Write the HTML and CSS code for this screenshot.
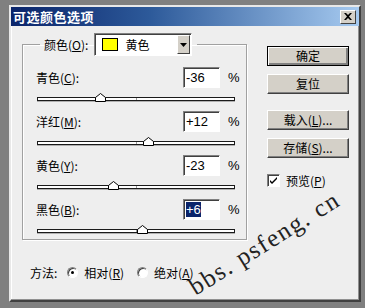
FILE: index.html
```html
<!DOCTYPE html>
<html lang="zh-CN">
<head>
    <meta charset="UTF-8">
    <title>可选颜色选项</title>
    <link rel="stylesheet" href="styles.css">
</head>
<body>
    <div class="window">
        <div class="titlebar">
            <span class="title">可选颜色选项</span>
            <span class="close-btn">
                <svg width="8" height="7" viewBox="0 0 8 7"><path d="M0 0 L2 0 L4 2 L6 0 L8 0 L5 3.5 L8 7 L6 7 L4 5 L2 7 L0 7 L3 3.5 Z" fill="#000"/></svg>
            </span>
        </div>

        <div class="content">
            <div class="left-col">
                <fieldset class="group">
                    <legend>
                        <span class="legend-label">颜色(<u>O</u>):</span>
                        <span class="dropdown">
                            <span class="swatch"></span>
                            <span class="dropdown-text">黄色</span>
                            <span class="dropdown-arrow">
                                <svg width="7" height="4" viewBox="0 0 7 4"><path d="M0 0 L7 0 L3.5 4 Z" fill="#000"/></svg>
                            </span>
                        </span>
                    </legend>

                    <div class="row">
                        <div class="row-head">
                            <span class="row-label">青色(<u>C</u>):</span>
                            <span class="num-box">-36</span>
                            <span class="pct">%</span>
                        </div>
                        <div class="track">
                            <span class="thumb" style="left: 62px;"><svg width="11" height="9" viewBox="0 0 11 9"><path d="M0.5 8.5 L0.5 4.5 L5.5 0.5 L10.5 4.5 L10.5 8.5 Z" fill="#fff" stroke="#000"/></svg></span>
                        </div>
                    </div>

                    <div class="row">
                        <div class="row-head">
                            <span class="row-label">洋红(<u>M</u>):</span>
                            <span class="num-box">+12</span>
                            <span class="pct">%</span>
                        </div>
                        <div class="track">
                            <span class="thumb" style="left: 110px;"><svg width="11" height="9" viewBox="0 0 11 9"><path d="M0.5 8.5 L0.5 4.5 L5.5 0.5 L10.5 4.5 L10.5 8.5 Z" fill="#fff" stroke="#000"/></svg></span>
                        </div>
                    </div>

                    <div class="row">
                        <div class="row-head">
                            <span class="row-label">黄色(<u>Y</u>):</span>
                            <span class="num-box">-23</span>
                            <span class="pct">%</span>
                        </div>
                        <div class="track">
                            <span class="thumb" style="left: 75px;"><svg width="11" height="9" viewBox="0 0 11 9"><path d="M0.5 8.5 L0.5 4.5 L5.5 0.5 L10.5 4.5 L10.5 8.5 Z" fill="#fff" stroke="#000"/></svg></span>
                        </div>
                    </div>

                    <div class="row">
                        <div class="row-head">
                            <span class="row-label">黑色(<u>B</u>):</span>
                            <span class="num-box"><span class="selected">+6</span></span>
                            <span class="pct">%</span>
                        </div>
                        <div class="track">
                            <span class="thumb" style="left: 104px;"><svg width="11" height="9" viewBox="0 0 11 9"><path d="M0.5 8.5 L0.5 4.5 L5.5 0.5 L10.5 4.5 L10.5 8.5 Z" fill="#fff" stroke="#000"/></svg></span>
                        </div>
                    </div>
                </fieldset>

                <div class="method">
                    <span class="method-label">方法:</span>
                    <span class="radio checked"></span>
                    <span class="radio-text">相对(<u>R</u>)</span>
                    <span class="radio"></span>
                    <span class="radio-text">绝对(<u>A</u>)</span>
                </div>
            </div>

            <div class="right-col">
                <button class="btn default">确定</button>
                <button class="btn">复位</button>
                <button class="btn spaced">载入(<u>L</u>)...</button>
                <button class="btn">存储(<u>S</u>)...</button>
                <div class="preview">
                    <span class="checkbox">
                        <svg width="9" height="9" viewBox="0 0 9 9"><path d="M1 4 L3 6 L8 1 L8 3 L3 8 L1 6 Z" fill="#000"/></svg>
                    </span>
                    <span>预览(<u>P</u>)</span>
                </div>
            </div>
        </div>

        <!-- watermark over the dialog -->
        <div class="watermark">bbs. psfeng. cn</div>
    </div>
</body>
</html>
```

FILE: styles.css
```css
body {
    margin: 0;
    padding: 0;
    background-color: #808080;
    font-family: "Noto Sans CJK SC", "Liberation Sans", sans-serif;
    font-size: 12px;
    color: #000;
}
u {
    text-decoration: underline;
    text-underline-offset: 1px;
}
.window {
    position: relative;
    box-sizing: border-box;
    width: 352px;
    height: 297px;
    margin: 5px 0 0 9px;
    background: #eeeeee;
    border: 2px solid;
    border-color: #e8e8e8 #404040 #404040 #e8e8e8;
    box-shadow: inset -1px -1px #909090, inset 1px 1px #ffffff;
    overflow: hidden;
}
.titlebar {
    display: flex;
    align-items: center;
    justify-content: space-between;
    height: 19px;
    padding: 0 3px 0 2px;
    background: linear-gradient(to right, #0a246a, #2d5a9a 40%, #a6caf0);
}
.title {
    color: white;
    font-weight: bold;
    font-size: 13px;
    letter-spacing: 0.5px;
}
.close-btn {
    display: flex;
    align-items: center;
    justify-content: center;
    box-sizing: border-box;
    width: 16px;
    height: 14px;
    background: #d4d0c8;
    border: 1px solid;
    border-color: #fff #404040 #404040 #fff;
}
.content {
    display: flex;
    padding: 7px 9px 0 11px;
}
.left-col {
    width: 225px;
}
.right-col {
    width: 82px;
    margin-left: 20px;
    margin-top: 13px;
    display: flex;
    flex-direction: column;
}
.group {
    margin: 0;
    padding: 0 8px 6px 13px;
    border: 1px solid #a0a0a0;
    box-shadow: 1px 1px #fff, inset 1px 1px #fff;
}
.group legend {
    display: flex;
    align-items: center;
    margin-left: 4px;
    padding: 0 5px 0 4px;
}
.legend-label {
    margin-right: 6px;
}
.dropdown {
    display: flex;
    align-items: center;
    box-sizing: border-box;
    width: 98px;
    height: 23px;
    background: white;
    border: 1px solid;
    border-color: #808080 #fff #fff #808080;
    box-shadow: inset 1px 1px #404040;
    padding: 0 1px 0 7px;
}
.swatch {
    width: 14px;
    height: 11px;
    background: #ffff00;
    border: 1px solid #000;
}
.dropdown-text {
    flex: 1;
    margin-left: 7px;
}
.dropdown-arrow {
    display: flex;
    align-items: center;
    justify-content: center;
    box-sizing: border-box;
    width: 13px;
    height: 19px;
    background: #d4d0c8;
    border: 1px solid;
    border-color: #fff #404040 #404040 #fff;
}
.row {
    padding-top: 10px;
}
.row:first-of-type {
    padding-top: 11px;
}
.row-head {
    display: flex;
    align-items: center;
    height: 21px;
}
.row-label {
    flex: 1;
}
.num-box {
    box-sizing: border-box;
    width: 37px;
    height: 21px;
    padding: 1px 0 0 2px;
    background: white;
    border: 1px solid;
    border-color: #808080 #fff #fff #808080;
    box-shadow: inset 1px 1px #404040;
    font-family: "Liberation Sans", sans-serif;
    font-size: 13px;
    line-height: 17px;
}
.selected {
    background: #0a246a;
    color: white;
}
.pct {
    width: 10px;
    margin-left: 8px;
    font-family: "Liberation Sans", sans-serif;
    font-size: 13px;
}
.track {
    position: relative;
    box-sizing: border-box;
    width: 198px;
    height: 4px;
    margin: 9px 0 0 1px;
    background: white;
    border: 1px solid #1a1a1a;
    box-shadow: 0 1px #b0b0b0;
}
.track::after {
    content: "";
    position: absolute;
    left: 98px;
    top: 0;
    width: 1px;
    height: 2px;
    background: #9a9a9a;
}
.thumb {
    position: absolute;
    top: -5px;
    margin-left: -5px;
    line-height: 0;
    z-index: 1;
}
.method {
    display: flex;
    align-items: center;
    height: 16px;
    margin: 24px 0 0 8px;
}
.method-label {
    margin-right: 10px;
}
.radio {
    box-sizing: border-box;
    width: 11px;
    height: 11px;
    border-radius: 50%;
    background: white;
    border: 1px solid;
    border-color: #808080 #fff #fff #808080;
    box-shadow: inset 1px 1px #404040;
    position: relative;
}
.radio.checked::after {
    content: "";
    position: absolute;
    left: 3px;
    top: 3px;
    width: 3px;
    height: 3px;
    border-radius: 50%;
    background: #000;
}
.radio-text {
    margin: 0 13px 0 6px;
}
.btn {
    box-sizing: border-box;
    width: 82px;
    height: 20px;
    margin-bottom: 8px;
    padding: 0;
    background: #d4d0c8;
    border: 1px solid;
    border-color: #fff #404040 #404040 #fff;
    box-shadow: inset -1px -1px #808080;
    font-family: "Noto Sans CJK SC", sans-serif;
    font-size: 12px;
    line-height: 16px;
    color: #000;
}
.btn.default {
    border: 1px solid #000;
    box-shadow: inset 1px 1px #fff, inset -2px -2px #808080;
}
.btn.spaced {
    margin-top: 8px;
}
.preview {
    display: flex;
    align-items: center;
    margin-top: 6px;
}
.checkbox {
    display: flex;
    align-items: center;
    justify-content: center;
    box-sizing: border-box;
    width: 13px;
    height: 13px;
    margin-right: 6px;
    background: white;
    border: 1px solid;
    border-color: #808080 #fff #fff #808080;
    box-shadow: inset 1px 1px #404040;
}
.watermark {
    position: absolute;
    left: 184px;
    top: 268px;
    line-height: 25px;
    transform: rotate(-32deg);
    transform-origin: 0 20px;
    font-family: "Liberation Serif", serif;
    font-size: 25px;
    color: #222;
    white-space: nowrap;
    letter-spacing: 1.5px;
}
```
